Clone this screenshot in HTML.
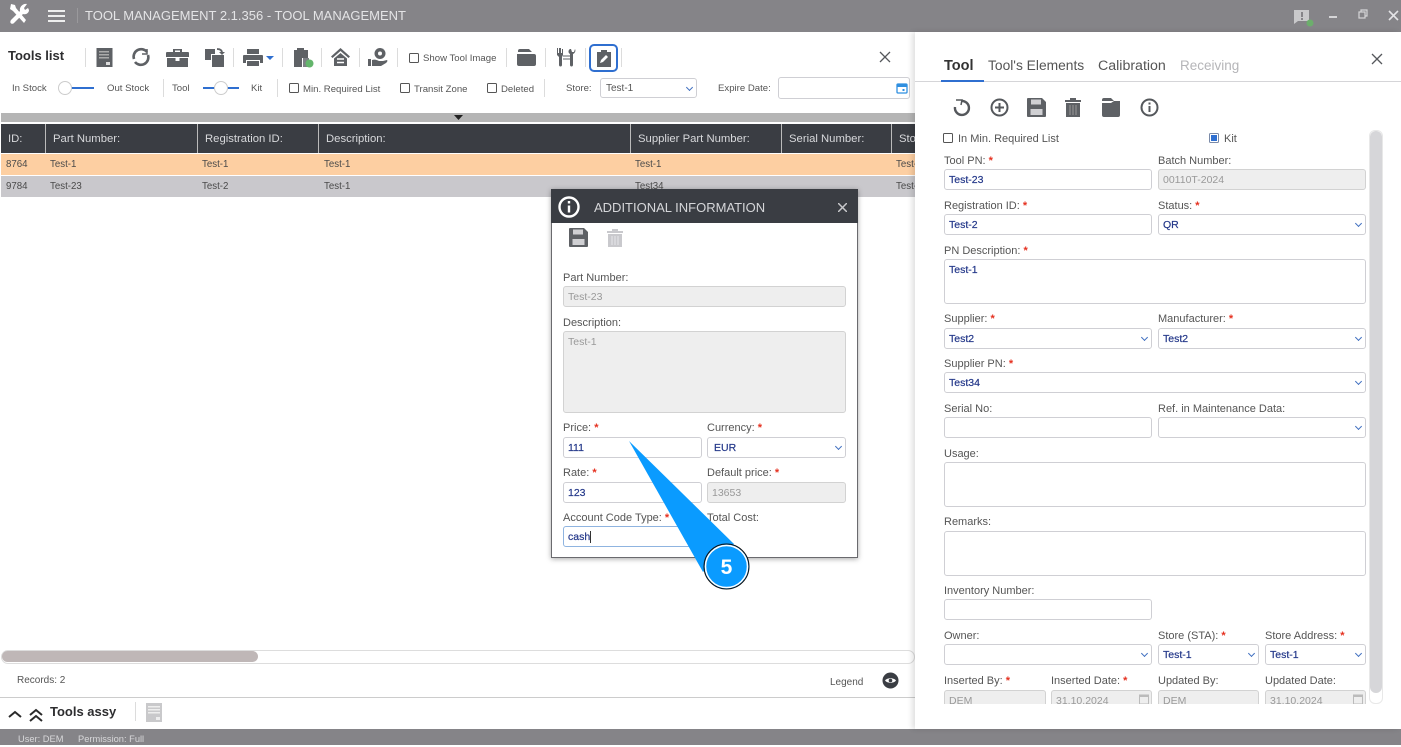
<!DOCTYPE html>
<html><head><meta charset="utf-8"><style>
html,body{margin:0;padding:0;width:1401px;height:745px;overflow:hidden;background:#fff;font-family:"Liberation Sans",sans-serif;color:#444}
div,span,svg{position:absolute}
.t{white-space:nowrap;line-height:16px;height:16px}
.s{font-size:9.6px;color:#555;margin-top:1px}
.l{font-size:11px;color:#555;margin-top:1px}
.h{font-size:11.3px;color:#d8d9dc;line-height:30px;top:124px;white-space:nowrap}
.c{font-size:9.7px;color:#4a4a4a;white-space:nowrap;line-height:22px}
.b{box-sizing:border-box;border:1px solid #cfcfd4;border-radius:3px;background:#fff;font-size:10.5px;color:#24388a;padding-left:4px;line-height:20px;white-space:nowrap;-webkit-text-stroke:.2px #24388a}
.d{background:#eee;color:#999;border-color:#d2d2d2;-webkit-text-stroke:0}
.r{color:#e5301f}
.v{width:1px;background:#dcdcdc}
.cb{box-sizing:border-box;width:10px;height:10px;border:1px solid #555;border-radius:1.5px;background:#fff}
.ch:after{content:"";position:absolute;right:4px;top:6px;width:4px;height:4px;border-right:1.3px solid #3f6fc0;border-bottom:1.3px solid #3f6fc0;transform:rotate(45deg)}
</style></head><body>

<!-- title bar -->
<div style="left:0;top:0;width:1401px;height:32px;background:#858488"></div>
<svg style="left:8px;top:3px" width="22" height="22" viewBox="0 0 22 22"><path d="M3 1l4 1 1 3 10 12-2 3L5 8 2 6z" fill="#fff"/><path d="M19 1l-3 4 1 2 3-2 1 2c0 3-3 5-6 4L6 20c-2 2-5 0-3-3l9-9c-1-4 3-8 7-7z" fill="#fff"/></svg>
<div style="left:48px;top:10px;width:17px;height:2px;background:#eee"></div>
<div style="left:48px;top:15px;width:17px;height:2px;background:#eee"></div>
<div style="left:48px;top:20px;width:17px;height:2px;background:#eee"></div>
<div style="left:77px;top:8px;width:1px;height:15px;background:#9a999c"></div>
<div class="t" style="left:85px;top:8px;font-size:13px;color:#e4e4e6">TOOL MANAGEMENT 2.1.356 - TOOL MANAGEMENT</div>
<svg style="left:1293px;top:9px" width="22" height="18" viewBox="0 0 22 18"><path d="M1 1h15v11H5l-4 3z" fill="#c9c9cb"/><rect x="8" y="3" width="2" height="5" fill="#858488"/><rect x="8" y="9" width="2" height="2" fill="#858488"/><circle cx="17" cy="14" r="3.500" fill="#6cae6c"/></svg>
<div style="left:1329px;top:16px;width:8px;height:2px;background:#d5d5d7"></div>
<svg style="left:1358px;top:9px" width="11" height="11" viewBox="0 0 11 11" fill="none" stroke="#d5d5d7" stroke-width="1.200"><rect x="1" y="3" width="6" height="6"/><path d="M3 3V1h6v6H7"/></svg>
<svg style="left:1388px;top:10px" width="12" height="12" viewBox="0 0 12 12" stroke="#e4e4e6" stroke-width="1.600"><path d="M1 1l9 9M10 1l-9 9"/></svg>

<!-- left toolbar -->
<div class="t" style="left:8px;top:48px;font-size:13px;font-weight:bold;color:#2d2d2f">Tools list</div>
<div class="v" style="left:85px;top:48px;height:19px"></div>
<svg style="left:96px;top:48px" width="17" height="20" viewBox="0 0 17 20"><rect width="16" height="19" x=".5" fill="#5e6165"/><path d="M3 3h10v1.500H3zM3 6h10v1.500H3zM3 9h10v1.500H3z" fill="#aaa"/><rect x="10" y="14" width="4" height="3" fill="#ddd"/></svg>
<svg style="left:131px;top:47px" width="20" height="20" viewBox="0 0 20 20" fill="none" stroke="#5e6165" stroke-width="2.600"><path d="M3 12A7.500 7.500 0 0 1 16 5"/><path d="M17 8A7.500 7.500 0 0 1 4 15"/><path d="M16 2v5h-5" stroke-width="1.500"/></svg>
<svg style="left:166px;top:48px" width="23" height="19" viewBox="0 0 23 19"><path d="M7 4V1h9v3h6a1 1 0 0 1 1 1v4H0V5a1 1 0 0 1 1-1zM9 2.500V4h5V2.500z" fill="#5e6165"/><path d="M1 10h21v9H1z" fill="#5e6165"/><rect x="9.500" y="9" width="4" height="4" fill="#fff"/></svg>
<svg style="left:205px;top:47px" width="20" height="21" viewBox="0 0 20 21"><path d="M0 2h10v5H6v6H0z" fill="#5e6165"/><path d="M7 8h12v12H7z" fill="#5e6165"/><path d="M12 2c3 0 5 1 5 4" fill="none" stroke="#5e6165" stroke-width="1.800"/><path d="M14 5h6l-3 3z" fill="#5e6165"/></svg>
<div class="v" style="left:233px;top:48px;height:19px"></div>
<svg style="left:243px;top:49px" width="24" height="18" viewBox="0 0 24 18"><path d="M4 0h12v5H4z" fill="#5e6165"/><path d="M1 6h18a1 1 0 0 1 1 1v7h-3v-3H3v3H0V7a1 1 0 0 1 1-1z" fill="#5e6165"/><path d="M4 12h12v5H4z" fill="#5e6165"/></svg>
<svg style="left:266px;top:56px" width="8" height="4" viewBox="0 0 8 4"><path d="M0 0h8L4 4z" fill="#2f6fd0"/></svg>
<div class="v" style="left:282px;top:48px;height:19px"></div>
<svg style="left:293px;top:48px" width="21" height="20" viewBox="0 0 21 20"><path d="M1 2h3V0h7v2h4v8h-6v9H1z" fill="#5e6165"/><path d="M10 10h6v9h-6z" fill="#7d8085"/><circle cx="16.500" cy="15.500" r="4" fill="#63b56b"/></svg>
<div class="v" style="left:321px;top:48px;height:19px"></div>
<svg style="left:331px;top:48px" width="19" height="19" viewBox="0 0 19 19"><path d="M9.500 0L19 8.500l-1.500 1.500-8-7-8 7L0 8.500z" fill="#5e6165"/><path d="M9.500 5L16 10.500V18H3v-7.500z" fill="#5e6165"/><path d="M6 11h7M6 14.500h7" stroke="#fff" stroke-width="1.400"/></svg>
<div class="v" style="left:359px;top:48px;height:19px"></div>
<svg style="left:368px;top:47px" width="20" height="20" viewBox="0 0 20 20"><circle cx="12" cy="6.500" r="5.500" fill="#5e6165"/><circle cx="12" cy="6.500" r="2" fill="#fff"/><path d="M0 12h3v7H0zM4 13c3-1 5 0 7 1h4l4-1c1 1 0 2-1 3l-5 3H4z" fill="#5e6165"/></svg>
<div class="v" style="left:397px;top:48px;height:19px"></div>
<div class="cb" style="left:409px;top:53px"></div>
<div class="t s" style="left:423px;top:50px">Show Tool Image</div>
<div class="v" style="left:506px;top:48px;height:19px"></div>
<svg style="left:517px;top:48px" width="19" height="19" viewBox="0 0 19 19"><path d="M1 3a2 2 0 0 1 2-2h9l3 3H1zM0 6h17a2 2 0 0 1 2 2v8a2 2 0 0 1-2 2H2a2 2 0 0 1-2-2z" fill="#5e6165"/></svg>
<div class="v" style="left:545px;top:48px;height:19px"></div>
<svg style="left:556px;top:48px" width="20" height="19" viewBox="0 0 20 19"><path d="M1 0h1v5h1V0h2v5h1V1h1v6L6 9v8c0 2-3 2-3 0V9L1 7z" fill="#5e6165"/><path d="M14 1c-2 1-2 4 0 5v11c0 2 3 2 3 0V6c2-1 3-3 2-5l-1 3h-2l-1-3z" fill="#5e6165"/><path d="M7 8h7M7 11h7" stroke="#5e6165" stroke-width="1"/></svg>
<div class="v" style="left:585px;top:48px;height:19px"></div>
<div style="left:589px;top:44px;box-sizing:border-box;width:29px;height:28px;border:2px solid #2f6fd0;border-radius:5px"></div>
<svg style="left:597px;top:50px" width="14" height="17" viewBox="0 0 14 17"><path d="M0 2h4V0h6v2h4v15H0z" fill="#5e6165"/><path d="M3 13l1-3 5-5 2 2-5 5z" fill="#fff"/></svg>
<div class="v" style="left:621px;top:48px;height:19px"></div>
<svg style="left:879px;top:51px" width="12" height="12" viewBox="0 0 12 12" stroke="#55585c" stroke-width="1.300"><path d="M1 1l10 10M11 1L1 11"/></svg>

<!-- second row -->
<div class="t s" style="left:12px;top:80px">In Stock</div>
<div style="left:70px;top:87px;width:24px;height:2px;background:#2f6fd0"></div>
<div style="left:58px;top:81px;box-sizing:border-box;width:14px;height:14px;border-radius:50%;background:#fff;border:1px solid #ccc"></div>
<div class="t s" style="left:107px;top:80px">Out Stock</div>
<div class="v" style="left:163px;top:79px;height:18px"></div>
<div class="t s" style="left:172px;top:80px">Tool</div>
<div style="left:203px;top:87px;width:36px;height:2px;background:#2f6fd0"></div>
<div style="left:214px;top:81px;box-sizing:border-box;width:14px;height:14px;border-radius:50%;background:#fff;border:1px solid #ccc"></div>
<div class="t s" style="left:251px;top:80px">Kit</div>
<div class="v" style="left:277px;top:79px;height:18px"></div>
<div class="cb" style="left:289px;top:83px"></div>
<div class="t s" style="left:303px;top:81px">Min. Required List</div>
<div class="cb" style="left:400px;top:83px"></div>
<div class="t s" style="left:414px;top:81px">Transit Zone</div>
<div class="cb" style="left:487px;top:83px"></div>
<div class="t s" style="left:501px;top:81px">Deleted</div>
<div class="v" style="left:544px;top:79px;height:18px"></div>
<div class="t s" style="left:566px;top:80px">Store:</div>
<div class="b ch" style="left:600px;top:78px;width:97px;height:20px;color:#555;font-size:10px;line-height:19px;padding-left:5px;-webkit-text-stroke:0">Test-1</div>
<div class="t s" style="left:718px;top:80px">Expire Date:</div>
<div class="b" style="left:778px;top:77px;width:132px;height:22px"></div>
<svg style="left:896px;top:82px" width="12" height="12" viewBox="0 0 12 12"><rect x="1" y="2" width="10" height="9" rx="1" fill="none" stroke="#2f8fe0" stroke-width="1.300"/><rect x="1" y="2" width="10" height="3" fill="#2f8fe0"/><rect x="6.500" y="7" width="2" height="2" fill="#2f8fe0"/></svg>

<!-- splitter + table -->
<div style="left:1px;top:113px;width:914px;height:9px;background:#b5b5b5"></div>
<svg style="left:454px;top:115px" width="9" height="5" viewBox="0 0 9 5"><path d="M0 0h9L4.500 5z" fill="#222"/></svg>
<div style="left:1px;top:124px;width:914px;height:29px;background:#3a3d43"></div>
<div style="left:1px;top:154px;width:914px;height:21px;background:#fdcfa2"></div>
<div style="left:1px;top:176px;width:914px;height:21px;background:#c9c8cc"></div>
<div style="left:45px;top:124px;width:1px;height:29px;background:#bbb"></div>
<div style="left:197px;top:124px;width:1px;height:29px;background:#bbb"></div>
<div style="left:318px;top:124px;width:1px;height:29px;background:#bbb"></div>
<div style="left:630px;top:124px;width:1px;height:29px;background:#bbb"></div>
<div style="left:781px;top:124px;width:1px;height:29px;background:#bbb"></div>
<div style="left:891px;top:124px;width:1px;height:29px;background:#bbb"></div>
<div class="h" style="left:8px">ID:</div>
<div class="h" style="left:53px">Part Number:</div>
<div class="h" style="left:205px">Registration ID:</div>
<div class="h" style="left:326px">Description:</div>
<div class="h" style="left:638px">Supplier Part Number:</div>
<div class="h" style="left:789px">Serial Number:</div>
<div class="h" style="left:899px;width:16px;overflow:hidden">Store</div>
<div class="c" style="left:6px;top:154px">8764</div>
<div class="c" style="left:50px;top:154px">Test-1</div>
<div class="c" style="left:202px;top:154px">Test-1</div>
<div class="c" style="left:324px;top:154px">Test-1</div>
<div class="c" style="left:635px;top:154px">Test-1</div>
<div class="c" style="left:896px;top:154px;width:19px;overflow:hidden">Test-1</div>
<div class="c" style="left:6px;top:176px">9784</div>
<div class="c" style="left:50px;top:176px">Test-23</div>
<div class="c" style="left:202px;top:176px">Test-2</div>
<div class="c" style="left:324px;top:176px">Test-1</div>
<div class="c" style="left:635px;top:176px">Test34</div>
<div class="c" style="left:896px;top:176px;width:19px;overflow:hidden">Test-1</div>

<!-- footer left -->
<div style="left:1px;top:650px;box-sizing:border-box;width:914px;height:14px;border:1px solid #ddd;border-radius:7px"></div>
<div style="left:2px;top:651px;width:256px;height:11px;background:#bfb7b7;border-radius:6px"></div>
<div class="t s" style="left:17px;top:673px;font-size:10px;margin-top:0">Records: 2</div>
<div class="t s" style="left:830px;top:674px;font-size:10px">Legend</div>
<svg style="left:882px;top:672px" width="17" height="17" viewBox="0 0 17 17"><circle cx="8.500" cy="8.500" r="8" fill="#3a3d43"/><path d="M3 8.500C5 5.500 12 5.500 14 8.500 12 11.500 5 11.500 3 8.500z" fill="#fff"/><circle cx="8.500" cy="8.500" r="1.800" fill="#3a3d43"/></svg>
<div style="left:0;top:697px;width:915px;height:1px;background:#ccc"></div>
<svg style="left:8px;top:706px" width="36" height="18" viewBox="0 0 36 18" fill="none" stroke="#2a2a2a" stroke-width="2"><path d="M1 11l6-5 6 5"/><path d="M22 9l6-5 6 5M22 15l6-5 6 5"/></svg>
<div class="t" style="left:50px;top:704px;font-size:13px;font-weight:bold;color:#2d2d2f">Tools assy</div>
<div class="v" style="left:135px;top:702px;height:19px"></div>
<svg style="left:146px;top:703px" width="16" height="19" viewBox="0 0 16 19"><rect width="16" height="19" fill="#c9c9cb"/><path d="M2 3h12v1.500H2zM2 6h12v1.500H2zM2 9h12v1.500H2z" fill="#eee"/><rect x="10" y="14" width="4" height="3" fill="#eee"/></svg>
<div style="left:0;top:729px;width:1401px;height:16px;background:#858488"></div>
<div class="t" style="left:18px;top:731px;font-size:9.3px;color:#d8d8da">User: DEM</div>
<div class="t" style="left:78px;top:731px;font-size:9.3px;color:#d8d8da">Permission: Full</div>

<!-- right panel -->
<div style="left:915px;top:32px;width:486px;height:697px;background:#fff;box-shadow:-3px 0 5px rgba(0,0,0,.12)"></div>
<div class="t" style="left:944px;top:58px;font-size:14.500px;font-weight:bold;color:#333">Tool</div>
<div class="t" style="left:988px;top:58px;font-size:13.800px;color:#555">Tool's Elements</div>
<div class="t" style="left:1098px;top:58px;font-size:14.200px;color:#555">Calibration</div>
<div class="t" style="left:1180px;top:58px;font-size:13.500px;color:#b5b5b8">Receiving</div>
<div style="left:915px;top:81px;width:486px;height:1px;background:#d5d5d8"></div>
<div style="left:941px;top:80px;width:43px;height:2px;background:#2f6fd0"></div>
<svg style="left:1371px;top:53px" width="12" height="12" viewBox="0 0 12 12" stroke="#55585c" stroke-width="1.300"><path d="M1 1l10 10M11 1L1 11"/></svg>
<svg style="left:953px;top:98px" width="19" height="19" viewBox="0 0 19 19" fill="none" stroke="#55585c" stroke-width="2.400"><path d="M8 3a7 7 0 1 1-6 6"/><path d="M3 2l6 0-1 5" stroke-width="1.500"/></svg>
<svg style="left:990px;top:98px" width="19" height="19" viewBox="0 0 19 19" fill="none" stroke="#55585c" stroke-width="2"><circle cx="9.500" cy="9.500" r="8"/><path d="M5 9.500h9M9.500 5v9"/></svg>
<svg style="left:1027px;top:98px" width="19" height="19" viewBox="0 0 19 19"><path d="M1 0h14l4 4v14a1 1 0 0 1-1 1H1a1 1 0 0 1-1-1V1a1 1 0 0 1 1-1z" fill="#5e6165"/><rect x="4" y="1.500" width="10" height="5" fill="#d0d0d3"/><rect x="3.500" y="11" width="12" height="6" fill="#d0d0d3"/></svg>
<svg style="left:1065px;top:98px" width="16" height="19" viewBox="0 0 16 19"><path d="M0 2h5V0h6v2h5v2H0zM1 5h14v14H1z" fill="#5e6165"/><path d="M5 7v10M8 7v10M11 7v10" stroke="#999" stroke-width="1"/></svg>
<svg style="left:1102px;top:98px" width="18" height="19" viewBox="0 0 18 19"><path d="M0 2a2 2 0 0 1 2-2h7l3 3H0zM0 5h9l3-2h6v14a2 2 0 0 1-2 2H2a2 2 0 0 1-2-2z" fill="#5e6165"/></svg>
<svg style="left:1140px;top:98px" width="19" height="19" viewBox="0 0 19 19" fill="none" stroke="#55585c" stroke-width="2"><circle cx="9.500" cy="9.500" r="8"/><path d="M9.500 8v6M9.500 4.500v2"/></svg>

<div class="cb" style="left:943px;top:133px"></div>
<div class="t l" style="left:958px;top:130px">In Min. Required List</div>
<div class="cb" style="left:1209px;top:133px;border-color:#7a8aa8"></div><div style="left:1211px;top:135px;width:6px;height:6px;background:#2f6fd0"></div>
<div class="t l" style="left:1224px;top:130px">Kit</div>

<div style="left:1369px;top:130px;box-sizing:border-box;width:14px;height:574px;border:1px solid #e8e8e8;border-radius:6px"></div>
<div style="left:1370px;top:131px;width:12px;height:562px;background:#d6d6d9;border-radius:6px"></div>

<div class="t l" style="left:944px;top:152px">Tool PN: <b class="r">*</b></div>
<div class="t l" style="left:1158px;top:152px">Batch Number:</div>
<div class="b" style="left:944px;top:169px;width:208px;height:21px">Test-23</div>
<div class="b d" style="left:1158px;top:169px;width:208px;height:21px">00110T-2024</div>

<div class="t l" style="left:944px;top:197px">Registration ID: <b class="r">*</b></div>
<div class="t l" style="left:1158px;top:197px">Status: <b class="r">*</b></div>
<div class="b" style="left:944px;top:214px;width:208px;height:21px">Test-2</div>
<div class="b ch" style="left:1158px;top:214px;width:208px;height:21px">QR</div>

<div class="t l" style="left:944px;top:242px">PN Description: <b class="r">*</b></div>
<div class="b" style="left:944px;top:259px;width:422px;height:45px">Test-1</div>

<div class="t l" style="left:944px;top:310px">Supplier: <b class="r">*</b></div>
<div class="t l" style="left:1158px;top:310px">Manufacturer: <b class="r">*</b></div>
<div class="b ch" style="left:944px;top:328px;width:208px;height:21px">Test2</div>
<div class="b ch" style="left:1158px;top:328px;width:208px;height:21px">Test2</div>

<div class="t l" style="left:944px;top:355px">Supplier PN: <b class="r">*</b></div>
<div class="b ch" style="left:944px;top:372px;width:422px;height:21px">Test34</div>

<div class="t l" style="left:944px;top:400px">Serial No:</div>
<div class="t l" style="left:1158px;top:400px">Ref. in Maintenance Data:</div>
<div class="b" style="left:944px;top:417px;width:208px;height:21px"></div>
<div class="b ch" style="left:1158px;top:417px;width:208px;height:21px"></div>

<div class="t l" style="left:944px;top:445px">Usage:</div>
<div class="b" style="left:944px;top:462px;width:422px;height:45px"></div>
<div class="t l" style="left:944px;top:513px">Remarks:</div>
<div class="b" style="left:944px;top:531px;width:422px;height:45px"></div>
<div class="t l" style="left:944px;top:582px">Inventory Number:</div>
<div class="b" style="left:944px;top:599px;width:208px;height:21px"></div>

<div class="t l" style="left:944px;top:627px">Owner:</div>
<div class="t l" style="left:1158px;top:627px">Store (STA): <b class="r">*</b></div>
<div class="t l" style="left:1265px;top:627px">Store Address: <b class="r">*</b></div>
<div class="b ch" style="left:944px;top:644px;width:208px;height:21px"></div>
<div class="b ch" style="left:1158px;top:644px;width:101px;height:21px">Test-1</div>
<div class="b ch" style="left:1265px;top:644px;width:101px;height:21px">Test-1</div>

<div class="t l" style="left:944px;top:672px">Inserted By: <b class="r">*</b></div>
<div class="t l" style="left:1051px;top:672px">Inserted Date: <b class="r">*</b></div>
<div class="t l" style="left:1158px;top:672px">Updated By:</div>
<div class="t l" style="left:1265px;top:672px">Updated Date:</div>
<div style="left:940px;top:690px;width:428px;height:14px;overflow:hidden">
<div class="b d" style="left:4px;top:0;width:102px;height:21px">DEM</div>
<div class="b d" style="left:111px;top:0;width:101px;height:21px">31.10.2024</div>
<div class="b d" style="left:218px;top:0;width:101px;height:21px">DEM</div>
<div class="b d" style="left:325px;top:0;width:101px;height:21px">31.10.2024</div>
<svg style="left:199px;top:4px" width="10" height="10" viewBox="0 0 10 10"><rect x=".5" y="1" width="9" height="9" fill="none" stroke="#bbb"/><rect x="0" y="1" width="10" height="2" fill="#bbb"/></svg>
<svg style="left:413px;top:4px" width="10" height="10" viewBox="0 0 10 10"><rect x=".5" y="1" width="9" height="9" fill="none" stroke="#bbb"/><rect x="0" y="1" width="10" height="2" fill="#bbb"/></svg>
</div>

<!-- modal -->
<div style="left:551px;top:189px;box-sizing:border-box;width:307px;height:369px;background:#fff;border:1px solid #6a6a6e;box-shadow:0 1px 5px rgba(0,0,0,.35)"></div>
<div style="left:551px;top:189px;width:307px;height:34px;background:#3a3d43"></div>
<svg style="left:558px;top:196px" width="22" height="22" viewBox="0 0 22 22" fill="none" stroke="#fff" stroke-width="2.400"><circle cx="11" cy="11" r="9.500"/><path d="M11 9.500v7M11 5v2.500"/></svg>
<div class="t" style="left:594px;top:200px;font-size:13px;color:#d5d6d9">ADDITIONAL INFORMATION</div>
<svg style="left:838px;top:203px" width="9" height="9" viewBox="0 0 9 9" stroke="#c8c9cc" stroke-width="1.500"><path d="M0 0l9 9M9 0L0 9"/></svg>
<svg style="left:569px;top:228px" width="19" height="19" viewBox="0 0 19 19"><path d="M1 0h14l4 4v14a1 1 0 0 1-1 1H1a1 1 0 0 1-1-1V1a1 1 0 0 1 1-1z" fill="#5e6165"/><rect x="4" y="1.500" width="10" height="5" fill="#d0d0d3"/><rect x="3.500" y="11" width="12" height="6" fill="#d0d0d3"/></svg>
<svg style="left:607px;top:229px" width="16" height="18" viewBox="0 0 16 18"><path d="M0 2h5V0h6v2h5v2H0zM1 5h14v13H1z" fill="#c9c9cd"/><path d="M5 7v9M8 7v9M11 7v9" stroke="#e8e8ea" stroke-width="1"/></svg>

<div class="t l" style="left:563px;top:269px">Part Number:</div>
<div class="b d" style="left:563px;top:286px;width:283px;height:21px;font-size:10.500px">Test-23</div>
<div class="t l" style="left:563px;top:314px">Description:</div>
<div class="b d" style="left:563px;top:331px;width:283px;height:82px;font-size:10.500px">Test-1</div>
<div class="t l" style="left:563px;top:419px">Price: <b class="r">*</b></div>
<div class="t l" style="left:707px;top:419px">Currency: <b class="r">*</b></div>
<div class="b" style="left:563px;top:437px;width:139px;height:21px">111</div>
<div class="b ch" style="left:707px;top:437px;width:139px;height:21px;padding-left:6px">EUR</div>
<div class="t l" style="left:563px;top:464px">Rate: <b class="r">*</b></div>
<div class="t l" style="left:707px;top:464px">Default price: <b class="r">*</b></div>
<div class="b" style="left:563px;top:482px;width:139px;height:21px">123</div>
<div class="b d" style="left:707px;top:482px;width:139px;height:21px;font-size:10.500px">13653</div>
<div class="t l" style="left:563px;top:509px">Account Code Type: <b class="r">*</b></div>
<div class="t l" style="left:707px;top:509px">Total Cost:</div>
<div class="b" style="left:563px;top:526px;width:139px;height:21px;border-color:#8fb4e0">cash<span style="position:static;border-left:1px solid #333;margin-left:0"></span></div>

<!-- callout -->
<svg style="left:620px;top:435px" width="140" height="160" viewBox="620 435 140 160"><polygon points="629,441 734,544 703,572" fill="#0a9bff"/><circle cx="726.500" cy="566.500" r="22.500" fill="#0a9bff" stroke="#111" stroke-width="1"/><circle cx="726.500" cy="566.500" r="21" fill="#0a9bff" stroke="#fff" stroke-width="1.500"/><text x="726.500" y="574" text-anchor="middle" font-family="Liberation Sans" font-weight="bold" font-size="21" fill="#fff">5</text></svg>
</body></html>
